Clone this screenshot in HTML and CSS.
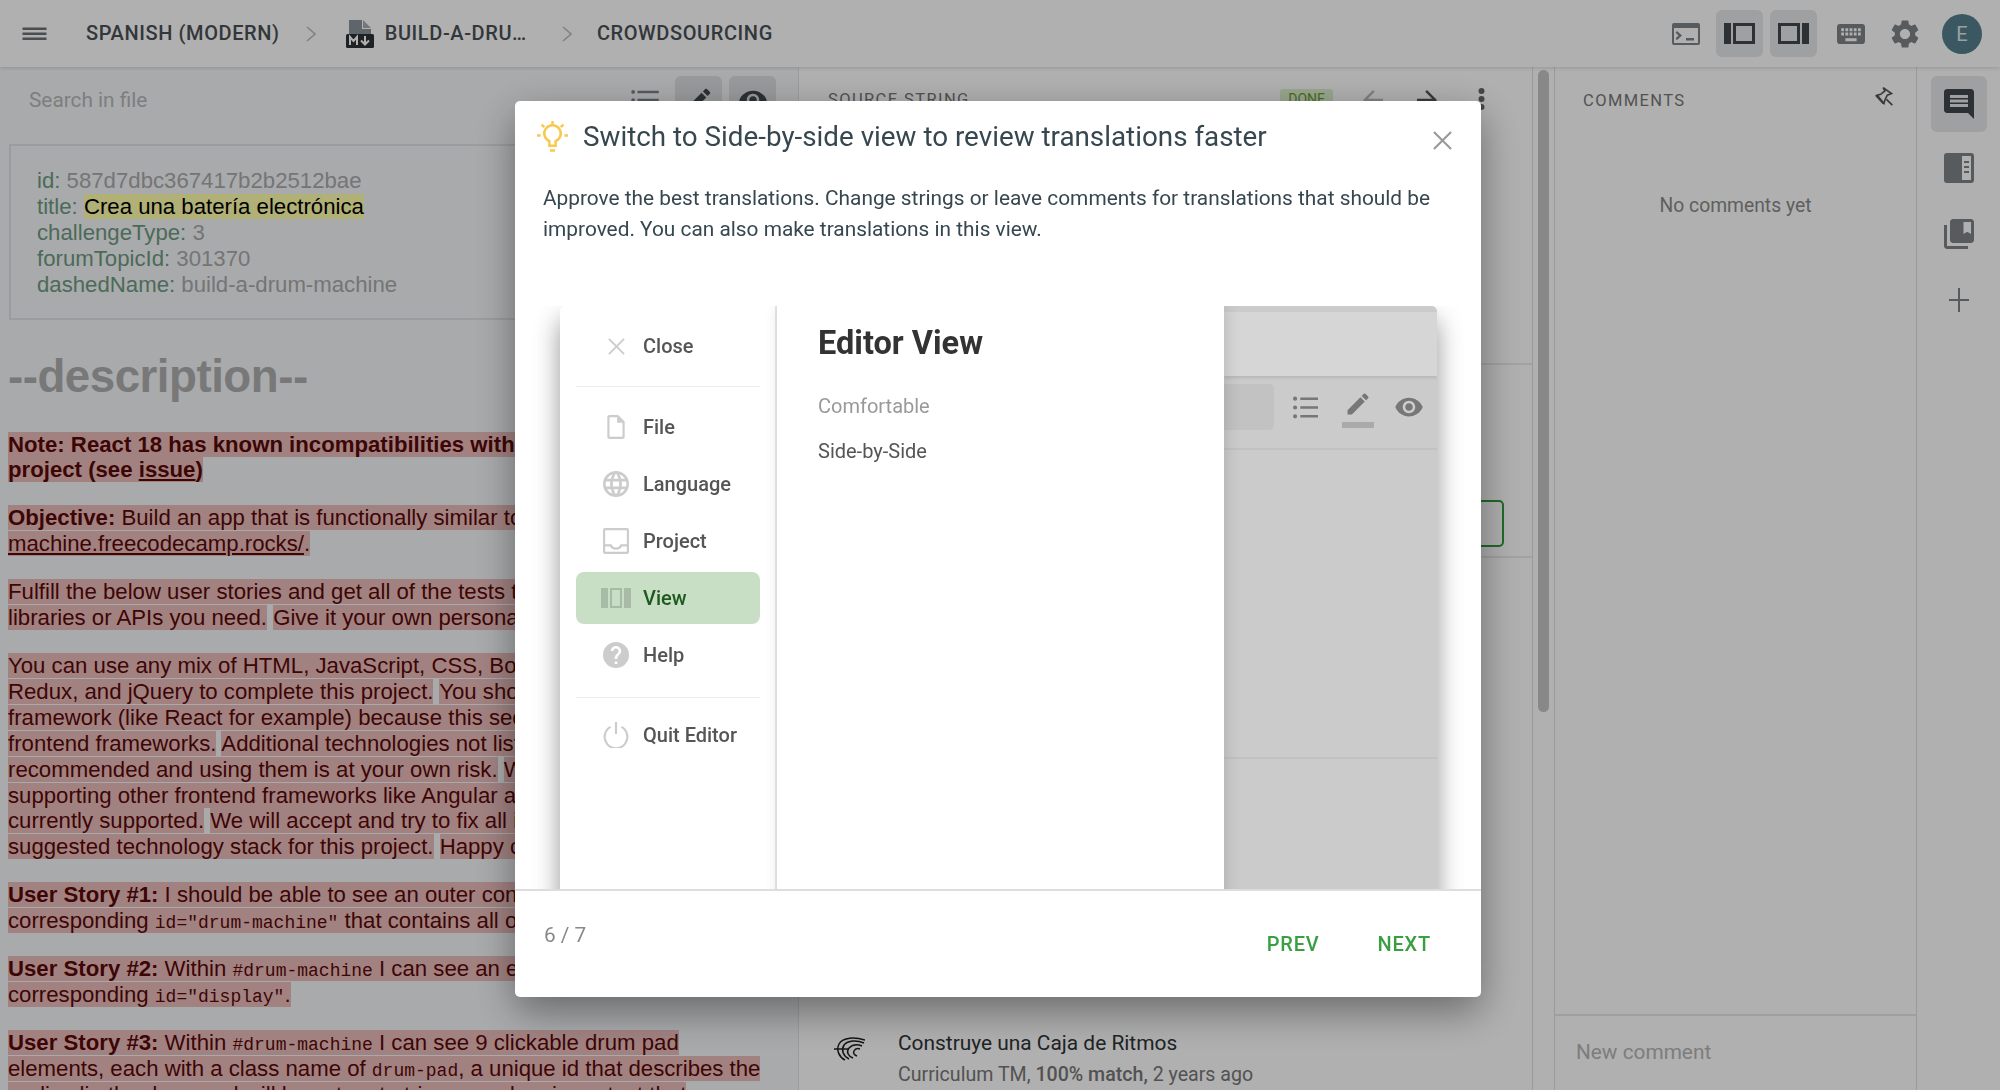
FILE: index.html
```html
<!DOCTYPE html>
<html lang="en">
<head>
    <meta charset="UTF-8" />
    <title>Crowdsourcing - Build a drum machine</title>
    <link rel="stylesheet" href="styles.css">
</head>
<body>
    <header class="topbar">
        <svg class="icon menu-icon" viewBox="0 0 24 24"><path d="M0 18h24v-2.4H0zm0-5h24v-2.4H0zM0 5.600v2.400h24V5.600z"/></svg>
        <span class="crumb crumb-lang">SPANISH (MODERN)</span>
        <svg class="chevron" viewBox="0 0 10 16"><path d="M1 1l8 7-8 7"/></svg>
        <svg class="md-icon" viewBox="0 0 28 28">
            <path class="md-page" d="M3 0h13v9h9v6H3z"/>
            <path class="md-fold" d="M17 0l8 8h-8z"/>
            <rect x="0" y="14" width="28" height="14" rx="1.500"/>
            <path class="md-mark" d="M4 25v-8l3.500 4 3.500-4v8M19 16v8M15 20.500l4 4 4-4"/>
        </svg>
        <span class="crumb crumb-file">BUILD-A-DRU…</span>
        <svg class="chevron chevron-two" viewBox="0 0 10 16"><path d="M1 1l8 7-8 7"/></svg>
        <span class="crumb">CROWDSOURCING</span>

        <div class="topbar-tools">
            <span class="tool"><svg class="icon icon-terminal" viewBox="0 0 28 22"><path d="M2 0h24a2 2 0 0 1 2 2v18a2 2 0 0 1-2 2H2a2 2 0 0 1-2-2V2a2 2 0 0 1 2-2zm0 5v15h24V5zm3 3l5 4.500-5 4.500-1.500-1.500 3-3-3-3zm9 7h8v2.500h-8z"/></svg></span>
            <span class="tool tool-on"><svg class="icon icon-pane dark" viewBox="0 0 31 21"><path fill-rule="evenodd" d="M0 0h7v21H0zM9 0h22v21H9zm3 3v15h16V3z"/></svg></span>
            <span class="tool tool-on"><svg class="icon icon-pane dark" viewBox="0 0 31 21"><path fill-rule="evenodd" d="M24 0h7v21h-7zM0 0h22v21H0zm3 3v15h16V3z"/></svg></span>
            <span class="tool tool-keys"><svg class="icon icon-keys" viewBox="2 5 20 14" preserveAspectRatio="none"><path d="M20 5H4c-1.100 0-2 .9-2 2v10c0 1.100.9 2 2 2h16c1.100 0 2-.9 2-2V7c0-1.100-.9-2-2-2zm-9 3h2v2h-2zm0 3h2v2h-2zM8 8h2v2H8zm0 3h2v2H8zm-1 2H5v-2h2zm0-3H5V8h2zm9 7H8v-2h8zm0-4h-2v-2h2zm0-3h-2V8h2zm3 3h-2v-2h2zm0-3h-2V8h2z"/></svg></span>
            <span class="tool"><svg class="icon gear" viewBox="0 0 24 24"><path d="M19.140 12.940c.04-.3.06-.61.06-.94 0-.32-.02-.64-.07-.94l2.030-1.580c.18-.14.23-.41.12-.61l-1.920-3.320c-.12-.22-.37-.29-.59-.22l-2.390.96c-.5-.38-1.030-.7-1.620-.94L14.400 2.810c-.04-.24-.24-.41-.48-.41h-3.840c-.24 0-.43.17-.47.41L9.250 5.350c-.59.24-1.130.57-1.620.94l-2.390-.96c-.22-.08-.47 0-.59.22L2.740 8.870c-.12.21-.08.47.12.61l2.030 1.580c-.05.3-.09.63-.09.94s.02.64.07.94l-2.030 1.580c-.18.14-.23.41-.12.61l1.920 3.320c.12.22.37.29.59.22l2.390-.96c.5.38 1.030.7 1.620.94l.36 2.540c.05.24.24.41.48.41h3.840c.24 0 .44-.17.47-.41l.36-2.540c.59-.24 1.130-.56 1.620-.94l2.390.96c.22.08.47 0 .59-.22l1.920-3.320c.12-.22.07-.47-.12-.61zM12 15.600c-1.980 0-3.600-1.620-3.600-3.600s1.620-3.600 3.600-3.600 3.600 1.620 3.600 3.600-1.620 3.600-3.600 3.600z"/></svg></span>
            <span class="avatar">E</span>
        </div>
    </header>

    <main class="editor">
        <section class="panel-file">
            <div class="file-search">
                <span class="search-label">Search in file</span>
                <div class="file-tools">
                    <span class="file-tool"><svg class="icon" viewBox="0 0 24 24"><path d="M1 5.500a1.500 1.500 0 1 0 3 0 1.500 1.500 0 0 0-3 0zm0 6.500a1.500 1.500 0 1 0 3 0 1.500 1.500 0 0 0-3 0zm0 6.500a1.500 1.500 0 1 0 3 0 1.500 1.500 0 0 0-3 0zM6 4.500h17v2H6zM6 11h17v2H6zM6 17.500h17v2H6z"/></svg></span>
                    <span class="file-tool file-tool-on"><svg class="icon dark" viewBox="0 0 24 24"><path d="M3 17.250V21h3.750L17.810 9.940l-3.750-3.750zM20.710 7.040c.39-.39.39-1.020 0-1.410l-2.340-2.340c-.39-.39-1.020-.39-1.410 0l-1.830 1.830 3.750 3.750z"/></svg></span>
                    <span class="file-tool file-tool-on"><svg class="icon dark" viewBox="0 0 24 24"><path d="M12 4.500C7 4.500 2.730 7.610 1 12c1.730 4.390 6 7.500 11 7.500s9.270-3.110 11-7.500c-1.730-4.390-6-7.500-11-7.500zM12 17c-2.760 0-5-2.240-5-5s2.240-5 5-5 5 2.240 5 5-2.240 5-5 5zm0-8c-1.660 0-3 1.340-3 3s1.340 3 3 3 3-1.340 3-3-1.340-3-3-3z"/></svg></span>
                </div>
            </div>

            <div class="preview">
                <div class="front-matter">
                    <div><span class="key">id:</span> 587d7dbc367417b2b2512bae</div>
                    <div><span class="key">title:</span> <mark class="yellow">Crea una batería electrónica</mark></div>
                    <div><span class="key">challengeType:</span> 3</div>
                    <div><span class="key">forumTopicId:</span> 301370</div>
                    <div><span class="key">dashedName:</span> build-a-drum-machine</div>
                </div>

                <h1>--description--</h1>

                <p><mark><strong>Note: React 18 has known incompatibilities with the tests for this<br>project (see <u>issue</u>)</strong></mark></p>
                <p><mark><strong>Objective:</strong> Build an app that is functionally similar to this: https://drum-<br><u>machine.freecodecamp.rocks/</u>.</mark></p>
                <p><mark>Fulfill the below user stories and get all of the tests to pass. Use whichever<br>libraries or APIs you need.</mark> <mark>Give it your own personal style.</mark></p>
                <p><mark>You can use any mix of HTML, JavaScript, CSS, Bootstrap, SASS, React,<br>Redux, and jQuery to complete this project.</mark> <mark>You should use a frontend<br>framework (like React for example) because this section is about learning<br>frontend frameworks.</mark> <mark>Additional technologies not listed above are not<br>recommended and using them is at your own risk.</mark> <mark>We are looking at<br>supporting other frontend frameworks like Angular and Vue, but they are not<br>currently supported.</mark> <mark>We will accept and try to fix all issue reports that use the<br>suggested technology stack for this project.</mark> <mark>Happy coding!</mark></p>
                <p><mark><strong>User Story #1:</strong> I should be able to see an outer container with a<br>corresponding <code>id="drum-machine"</code> that contains all other elements.</mark></p>
                <p><mark><strong>User Story #2:</strong> Within <code>#drum-machine</code> I can see an element with a<br>corresponding <code>id="display"</code>.</mark></p>
                <p><mark><strong>User Story #3:</strong> Within <code>#drum-machine</code> I can see 9 clickable drum pad<br>elements, each with a class name of <code>drum-pad</code>, a unique id that describes the<br>audio clip the drum pad will be set up to trigger, and an inner text that</mark></p>
            </div>
        </section>

        <section class="panel-string">
            <div class="string-head">
                <span class="panel-title">SOURCE STRING</span>
                <span class="done-badge">DONE</span>
                <svg class="icon arrow arrow-off" viewBox="0 0 24 24"><path d="M20 11H7.830l5.590-5.590L12 4l-8 8 8 8 1.410-1.410L7.830 13H20z"/></svg>
                <svg class="icon arrow" viewBox="0 0 24 24"><path d="M4 11h12.170l-5.590-5.590L12 4l8 8-8 8-1.410-1.410L16.170 13H4z"/></svg>
                <svg class="icon dots" viewBox="0 0 6 24"><circle cx="3" cy="4" r="3"/><circle cx="3" cy="12" r="3"/><circle cx="3" cy="20" r="3"/></svg>
            </div>
            <div class="string-editor">
                <span class="save-button"></span>
            </div>
            <div class="suggestion">
                <svg class="tm-logo" viewBox="0 0 32 24">
                    <path d="M32 3C22 0 10 0 6 7c-3 6 0 13 6 16"/>
                    <path d="M31 6C24 3 15 3 11 8c-3 5-1 11 5 14"/>
                    <path d="M29 9c-5-2-10-1-13 2-3 4-1 8 4 10"/>
                    <path d="M27 12c-3-1-5 0-6 2-1 2 0 4 3 5"/>
                    <path d="M1 12h14"/>
                </svg>
                <div>
                    <div class="suggestion-text">Construye una Caja de Ritmos</div>
                    <div class="suggestion-meta">Curriculum TM, <b>100% match,</b> 2 years ago</div>
                </div>
            </div>
        </section>

        <div class="scroll-track"><span class="scroll-thumb"></span></div>

        <section class="panel-comments">
            <div class="comments-head">
                <span class="panel-title">COMMENTS</span>
                <svg class="pin" viewBox="0 0 24 24"><path d="M11 2l10 7-5 2-3 6-1 4-8-10 4-1 5-4zM15 16l7 7M2 11l9 10"/></svg>
            </div>
            <div class="comments-empty">No comments yet</div>
            <div class="comment-input">New comment</div>
        </section>

        <nav class="rail">
            <span class="rail-btn rail-btn-on"><svg class="icon dark" viewBox="2 2 20 20"><path d="M21.990 4c0-1.100-.89-2-1.990-2H4c-1.100 0-2 .9-2 2v12c0 1.100.9 2 2 2h14l4 4zM18 14H6v-2h12zm0-3H6V9h12zm0-3H6V6h12z"/></svg></span>
            <span class="rail-btn"><svg class="icon" viewBox="0 0 30 30"><path d="M3 0h24a3 3 0 0 1 3 3v24a3 3 0 0 1-3 3H3a3 3 0 0 1-3-3V3a3 3 0 0 1 3-3zm15 3v24h9V3zm2 5h5v2h-5zm0 5h5v2h-5zm0 5h5v2h-5z" fill-rule="evenodd"/></svg></span>
            <span class="rail-btn"><svg class="icon" viewBox="2 2 20 20"><path d="M4 6H2v14c0 1.100.9 2 2 2h14v-2H4zm16-4H8c-1.100 0-2 .9-2 2v12c0 1.100.9 2 2 2h12c1.100 0 2-.9 2-2V4c0-1.100-.9-2-2-2zm0 10l-2.500-1.500L15 12V4h5z"/></svg></span>
            <span class="rail-btn"><svg class="icon plus" viewBox="0 0 20 24"><path d="M9 0h2v11h9v2h-9v11H9V13H0v-2h9z"/></svg></span>
        </nav>
    </main>

    <div class="overlay">
        <div class="modal">
            <div class="modal-head">
                <svg class="bulb" viewBox="0 0 30 30">
                    <path d="M15 0v3.500M4.500 3.500L7 6M25.500 3.500L23 6M0 14h3.500M26.500 14H30"/>
                    <path d="M12 24v-4.500a8 8 0 1 1 6 0V24z"/>
                    <path d="M12.500 28.500h5"/>
                </svg>
                <h2>Switch to Side-by-side view to review translations faster</h2>
                <svg class="modal-close" viewBox="0 0 20 20"><path d="M1 1l18 18M19 1L1 19"/></svg>
            </div>
            <p class="modal-text">Approve the best translations. Change strings or leave comments for translations that should be improved. You can also make translations in this view.</p>

            <div class="shot-wrap">
                <div class="shot">
                    <div class="shot-menu">
                        <div class="shot-item shot-close">
                            <svg class="shot-icon stroke" viewBox="0 0 20 20"><path d="M2 2l16 16M18 2L2 18"/></svg>Close
                        </div>
                        <div class="shot-group">
                            <div class="shot-item"><svg class="shot-icon" viewBox="0 0 24 24"><path d="M14 1H6C4.700 1 4 2 4 3v18c0 1.200.8 2 2 2h12c1.200 0 2-.8 2-2V7zM6 21V3h7v5h5v13z"/></svg>File</div>
                            <div class="shot-item"><svg class="shot-icon" viewBox="0 0 24 24"><path d="M12 0a12 12 0 1 0 0 24 12 12 0 0 0 0-24zm8.300 7.200h-3.500a18 18 0 0 0-1.700-4.300 9.700 9.700 0 0 1 5.200 4.300zM12 2.400a17 17 0 0 1 2.300 4.800H9.700A17 17 0 0 1 12 2.400zM2.700 14.400a9.700 9.700 0 0 1 0-4.800h4a20 20 0 0 0 0 4.800zm1 2.400h3.500a18 18 0 0 0 1.700 4.300 9.700 9.700 0 0 1-5.200-4.300zm3.500-9.600H3.700a9.700 9.700 0 0 1 5.200-4.300 18 18 0 0 0-1.700 4.300zM12 21.600a17 17 0 0 1-2.300-4.800h4.600a17 17 0 0 1-2.300 4.800zm2.800-7.200H9.200a17 17 0 0 1 0-4.800h5.600a17 17 0 0 1 0 4.800zm.3 6.700a18 18 0 0 0 1.700-4.300h3.500a9.700 9.700 0 0 1-5.200 4.300zm2.200-6.700a20 20 0 0 0 0-4.800h4a9.700 9.700 0 0 1 0 4.800z"/></svg>Language</div>
                            <div class="shot-item"><svg class="shot-icon" viewBox="0 0 24 24"><path d="M2 0h20a2 2 0 0 1 2 2v20a2 2 0 0 1-2 2H2a2 2 0 0 1-2-2V2a2 2 0 0 1 2-2zm0 2v13h6c.5 2 2 3 4 3s3.500-1 4-3h6V2zm0 15v5h20v-5h-4.500c-1 2-3 3-5.500 3s-4.500-1-5.500-3z"/></svg>Project</div>
                            <div class="shot-item shot-item-on"><svg class="shot-icon shot-icon-wide" viewBox="0 0 30 20"><path d="M0 0h7v20H0zM23 0h7v20h-7zM9 0h12v20H9zm2 2v16h8V2z"/></svg>View</div>
                            <div class="shot-item"><svg class="shot-icon" viewBox="2 2 20 20"><path d="M12 2a10 10 0 1 0 0 20 10 10 0 0 0 0-20zm1 17h-2v-2h2zm2.070-7.750l-.9.92C13.450 12.900 13 13.500 13 15h-2v-.5c0-1.100.45-2.100 1.170-2.830l1.240-1.260c.37-.36.59-.86.59-1.410 0-1.100-.9-2-2-2s-2 .9-2 2H8c0-2.210 1.790-4 4-4s4 1.790 4 4c0 .88-.36 1.680-.93 2.250z"/></svg>Help</div>
                        </div>
                        <div class="shot-item shot-quit">
                            <svg class="shot-icon stroke" viewBox="0 0 24 24"><path d="M7 4.500a10.500 10.500 0 1 0 10 0M12 0v11"/></svg>Quit Editor
                        </div>
                    </div>
                    <div class="shot-options">
                        <h3>Editor View</h3>
                        <div class="shot-option muted">Comfortable</div>
                        <div class="shot-option">Side-by-Side</div>
                    </div>
                    <div class="shot-page">
                        <div class="shot-page-head"></div>
                        <div class="shot-page-bar">
                            <span class="shot-page-search"></span>
                            <svg class="shot-page-icon shot-list" viewBox="0 0 24 24"><path d="M0 3.500a2 2 0 1 0 4 0 2 2 0 0 0-4 0zm0 8.500a2 2 0 1 0 4 0 2 2 0 0 0-4 0zm0 8.500a2 2 0 1 0 4 0 2 2 0 0 0-4 0zM7 2.300h17v2.400H7zM7 10.800h17v2.400H7zM7 19.300h17v2.400H7z"/></svg>
                            <span class="shot-pencil">
                                <svg class="shot-page-icon" viewBox="0 0 24 24"><path d="M3 17.250V21h3.750L17.810 9.940l-3.750-3.750zM20.710 7.040c.39-.39.39-1.020 0-1.410l-2.340-2.340c-.39-.39-1.020-.39-1.410 0l-1.830 1.830 3.750 3.750z"/></svg>
                            </span>
                            <svg class="shot-page-icon shot-eye" viewBox="0 0 24 24"><path d="M12 4.500C7 4.500 2.730 7.610 1 12c1.730 4.390 6 7.500 11 7.500s9.270-3.110 11-7.500c-1.730-4.390-6-7.500-11-7.500zM12 17c-2.760 0-5-2.240-5-5s2.240-5 5-5 5 2.240 5 5-2.240 5-5 5zm0-8c-1.660 0-3 1.340-3 3s1.340 3 3 3 3-1.340 3-3-1.340-3-3-3z"/></svg>
                        </div>
                        <div class="shot-page-body"></div>
                    </div>
                </div>
            </div>

            <div class="modal-foot">
                <span class="step">6 / 7</span>
                <div class="modal-actions">
                    <button class="foot-btn">PREV</button>
                    <button class="foot-btn">NEXT</button>
                </div>
            </div>
        </div>
    </div>
</body>
</html>
```

FILE: styles.css
```css
* {
    box-sizing: border-box;
}

html,
body {
    height: 100%;
}

body {
    margin: 0;
    width: 2000px;
    height: 1090px;
    overflow: hidden;
    display: flex;
    flex-direction: column;
    font-family: 'Roboto', sans-serif;
    background-color: #fff;
    color: #333;
}

.icon {
    display: block;
    fill: #7f8488;
}

.icon.dark {
    fill: #3f474d;
}

/* top bar */
.topbar {
    flex: 0 0 67px;
    display: flex;
    align-items: center;
    padding-left: 22px;
    background-color: #fff;
    box-shadow: 0 1px 4px rgba(0, 0, 0, 0.15);
    position: relative;
    z-index: 2;
}

.menu-icon {
    width: 25px;
    height: 24px;
    margin-right: 39px;
    fill: #6d7175;
}

.crumb {
    margin-top: -2px;
    font-size: 20px;
    font-weight: 500;
    letter-spacing: 0.6px;
    color: #4a5055;
    white-space: nowrap;
}

.chevron {
    width: 10px;
    height: 16px;
    margin: 0 30px 0 26px;
    fill: none;
    stroke: #bbb;
    stroke-width: 1.6;
}

.md-icon {
    width: 28px;
    height: 28px;
    margin-right: 11px;
    fill: #2d3236;
}

.md-page {
    fill: #89949c;
}

.md-fold {
    fill: #a5adb3;
}

.md-mark {
    fill: none;
    stroke: #fff;
    stroke-width: 2;
}

.chevron-two {
    margin-left: 35px;
    margin-right: 25px;
}

.topbar-tools {
    margin-left: auto;
    display: flex;
    align-items: center;
    gap: 7px;
    padding-right: 18px;
}

.tool {
    width: 47px;
    height: 47px;
    display: flex;
    align-items: center;
    justify-content: center;
    border-radius: 6px;
}

.icon-terminal {
    width: 28px;
    height: 22px;
}

.icon-pane {
    width: 31px;
    height: 21px;
}

.icon-keys {
    width: 28px;
    height: 20px;
}

.tool-keys {
    margin-left: 3px;
}

.tool .gear {
    width: 34px;
    height: 34px;
}

.tool-on {
    background-color: #e6e8ea;
}

.avatar {
    width: 40px;
    height: 40px;
    margin-left: 7px;
    border-radius: 50%;
    background-color: #56808f;
    color: #dfe8ea;
    font-size: 20px;
    display: flex;
    align-items: center;
    justify-content: center;
}

/* three panels */
.editor {
    flex: 1;
    display: flex;
    min-height: 0;
}

.panel-file {
    flex: 0 0 799px;
    background-color: #f5f7fa;
    border-right: 1px solid #e3e3e3;
    overflow: hidden;
}

.file-search {
    height: 77px;
    display: flex;
    align-items: flex-start;
    justify-content: space-between;
    padding: 9px 22px 0 29px;
}

.search-label {
    margin-top: 12px;
    font-size: 20.8px;
    color: #b5b7b9;
}

.file-tools {
    display: flex;
    gap: 7px;
}

.file-tool {
    width: 47px;
    height: 47px;
    border-radius: 6px;
    display: flex;
    align-items: center;
    justify-content: center;
}

.file-tool .icon {
    width: 30px;
    height: 30px;
}

.file-tool-on {
    background-color: #dcdfe2;
}

.preview {
    padding-left: 8px;
    font-family: 'Liberation Sans', sans-serif;
    font-size: 22.2px;
    line-height: 25.9px;
}

.front-matter {
    margin: 0 0 0 1px;
    padding: 22px 26px 20px;
    border: 2px solid #e1e3e6;
    color: #aaa;
}

.key {
    color: #6f9a80;
}

mark {
    background-color: #eabdbc;
    color: #5a0808;
}

mark.yellow {
    background-color: #ffffad;
    color: #000;
}

h1 {
    margin: 32px 0 30px;
    font-size: 45.7px;
    line-height: 50px;
    color: #aeaeae;
    letter-spacing: -0.5px;
}

.preview p {
    margin: 0 0 22px;
    white-space: nowrap;
}

code {
    font-family: 'Liberation Mono', monospace;
    font-size: 18px;
    line-height: 0;
}

.panel-string {
    flex: 0 0 734px;
    display: flex;
    flex-direction: column;
    background-color: #fff;
    border-right: 1px solid #e0e0e0;
    overflow: hidden;
}

.string-head {
    flex: 0 0 298px;
    display: flex;
    align-items: flex-start;
    padding: 22px 47px 0 29px;
    border-bottom: 2px solid #ebebeb;
}

.panel-title {
    font-size: 16.5px;
    letter-spacing: 1.4px;
    color: #777;
    margin-top: 1px;
}

.done-badge {
    margin-left: auto;
    margin-right: 25px;
    padding: 2px 8px;
    font-size: 14px;
    background-color: #dff0cf;
    color: #6a9d2e;
    border-radius: 3px;
}

.arrow {
    width: 30px;
    height: 30px;
    margin-top: -4px;
    margin-right: 24px;
    fill: #555;
}

.arrow-off {
    fill: #bbb;
}

.dots {
    width: 7px;
    height: 24px;
    margin: -2px 0 0 12px;
    fill: #666;
}

.string-editor {
    flex: 0 0 193px;
    border-bottom: 2px solid #ebebeb;
    display: flex;
    align-items: flex-end;
    justify-content: flex-end;
    padding: 0 28px 9px 0;
}

.save-button {
    width: 200px;
    height: 47px;
    border: 2px solid #2f9a3a;
    border-radius: 5px;
}

.suggestion {
    margin-top: auto;
    display: flex;
    gap: 33px;
    padding: 0 0 4px 34px;
}

.tm-logo {
    width: 32px;
    height: 24px;
    flex: none;
    margin-top: 6px;
    fill: none;
    stroke: #1c1c1c;
    stroke-width: 1.500;
}

.suggestion-text {
    font-size: 20.9px;
    color: #2f3336;
    margin-bottom: 8px;
}

.suggestion-meta {
    font-size: 19.6px;
    color: #777;
}

.suggestion-meta b {
    font-weight: 500;
}

.scroll-track {
    flex: 0 0 21px;
    padding: 3px 5px 0;
    background-color: #fff;
    border-right: 1px solid #e0e0e0;
}

.scroll-thumb {
    display: block;
    width: 11px;
    height: 642px;
    border-radius: 6px;
    background-color: #c6c6c6;
}

.panel-comments {
    flex: 0 0 362px;
    display: flex;
    flex-direction: column;
    border-right: 1px solid #e0e0e0;
}

.comments-head {
    display: flex;
    justify-content: space-between;
    padding: 23px 22px 0 28px;
}

.pin {
    width: 20px;
    height: 20px;
    margin-top: -4px;
    fill: none;
    stroke: #555;
    stroke-width: 2;
}

.comments-empty {
    margin-top: 84px;
    text-align: center;
    font-size: 19.3px;
    color: #8a8a8a;
}

.comment-input {
    margin-top: auto;
    height: 76px;
    padding: 24px 20px 0 21px;
    border-top: 2px solid #e6e6e6;
    font-size: 20.8px;
    color: #b5b5b5;
}

.rail {
    flex: 1;
    display: flex;
    flex-direction: column;
    align-items: center;
    padding: 9px 18px 0 14px;
    gap: 6px;
}

.rail-btn {
    width: 56px;
    height: 60px;
    flex: none;
    border-radius: 6px;
    display: flex;
    align-items: center;
    justify-content: center;
}

.rail-btn .icon {
    width: 30px;
    height: 30px;
}

.rail-btn .plus {
    width: 20px;
    height: 24px;
}

.rail-btn-on {
    height: 56px;
    background-color: #e6e8ea;
}

/* dimmed layer and tour dialog */
.overlay {
    position: fixed;
    top: 0;
    left: 0;
    width: 2000px;
    height: 1090px;
    padding: 8px 4px 0 0;
    background-color: rgba(0, 0, 0, 0.31);
    z-index: 10;
    display: flex;
    align-items: center;
    justify-content: center;
}

.modal {
    width: 966px;
    height: 896px;
    display: flex;
    flex-direction: column;
    border-radius: 5px;
    background-color: #fff;
    box-shadow: 0 14px 40px rgba(0, 0, 0, 0.4);
    overflow: hidden;
}

.modal-head {
    display: flex;
    align-items: center;
    padding: 19px 29px 0 22px;
}

.bulb {
    width: 31px;
    height: 31px;
    margin: 1px 15px 1px 0;
    fill: none;
    stroke: #f8c94f;
    stroke-width: 2.400;
}

.modal-head h2 {
    margin: 0;
    font-size: 27.8px;
    font-weight: 400;
    color: #37474f;
}

.modal-close {
    width: 19px;
    height: 19px;
    margin-left: auto;
    margin-top: 8px;
    fill: none;
    stroke: #999;
    stroke-width: 2.2;
}

.modal-text {
    margin: 30px 28px 0;
    font-size: 20.85px;
    line-height: 31px;
    color: #37474f;
}

.shot-wrap {
    flex: 1;
    min-height: 0;
    margin-top: 61px;
    padding: 0 44px 0 45px;
    overflow: hidden;
    border-bottom: 2px solid #ddd;
}

.shot {
    display: flex;
    height: 640px;
    border-radius: 6px;
    box-shadow: 0 14px 26px rgba(0, 0, 0, 0.42);
}

.shot-menu {
    flex: 0 0 217px;
    padding: 0 15px 0 16px;
    background-color: #fff;
    border-right: 2px solid #e8e8e8;
    border-radius: 6px 0 0 0;
}

.shot-item {
    height: 52px;
    display: flex;
    align-items: center;
    padding-left: 28px;
    font-size: 20px;
    font-weight: 500;
    color: #555;
    border-radius: 8px;
    margin-bottom: 5px;
}

.shot-close {
    height: 64px;
    margin: 8px 0 8px;
}

.shot-group {
    padding: 14px 0 11px;
    margin-bottom: 11px;
    border-top: 1px solid #ececec;
    border-bottom: 1px solid #ececec;
}

.shot-item-on {
    background-color: #c8dfc6;
    color: #1e5a1e;
}

.shot-icon {
    width: 26px;
    height: 26px;
    margin: 0 14px 0 -1px;
    fill: #cccccc;
}

.shot-icon.stroke {
    fill: none;
    stroke: #cccccc;
    stroke-width: 2;
}

.shot-close .shot-icon {
    width: 19px;
    height: 19px;
    margin: 0 17px 0 3px;
}

.shot-icon-wide {
    width: 30px;
    margin: 0 12px 0 -3px;
    fill: #a7bba6;
}

.shot-options {
    flex: 0 0 447px;
    padding: 15px 32px 14px 41px;
    background-color: #fff;
    box-shadow: 2px 0 14px rgba(0, 0, 0, 0.14);
    position: relative;
}

.shot-options h3 {
    margin: 0 0 29px;
    font-size: 32.5px;
    line-height: 44px;
    font-weight: 700;
    color: #333;
}

.shot-option {
    font-size: 20px;
    line-height: 24px;
    margin-bottom: 21px;
    color: #555;
}

.muted {
    color: #999;
}

.shot-page {
    flex: 1;
    border-radius: 0 6px 0 0;
    overflow: hidden;
    background-color: #cbcbcb;
}

.shot-page-head {
    height: 70px;
    background-color: #d6d6d6;
    border-top: 6px solid #cbcbcb;
    box-shadow: 0 2px 3px rgba(0, 0, 0, 0.1);
}

.shot-page-bar {
    height: 74px;
    display: flex;
    align-items: center;
    border-bottom: 2px solid #c2c2c2;
}

.shot-page-search {
    width: 50px;
    height: 46px;
    margin-right: 19px;
    margin-top: -10px;
    border-radius: 0 5px 5px 0;
    background-color: #c2c2c2;
}

.shot-page-icon {
    display: block;
    width: 28px;
    height: 28px;
    margin-top: -10px;
    fill: #777;
}

.shot-list {
    width: 25px;
    height: 25px;
}

.shot-pencil {
    display: block;
    width: 32px;
    margin: 0 20px 0 24px;
    padding-bottom: 4px;
    border-bottom: 6px solid #aaa;
}

.shot-pencil .shot-page-icon {
    margin: 0 auto;
    margin-top: -6px;
}

.shot-eye {
    width: 30px;
    height: 30px;
}

.shot-page-body {
    height: 309px;
    border-bottom: 2px solid #c2c2c2;
}

.modal-foot {
    flex: 0 0 106px;
    display: flex;
    align-items: flex-start;
    justify-content: space-between;
    padding: 21px 50px 0 29px;
}

.step {
    margin-top: 9px;
    font-size: 20.8px;
    line-height: 28px;
    color: #888;
}

.modal-actions {
    display: flex;
    gap: 58px;
    padding-top: 20px;
}

.foot-btn {
    padding: 0;
    border: 0;
    background: none;
    font-family: inherit;
    font-size: 20px;
    font-weight: 500;
    letter-spacing: 0.8px;
    color: #3a9e42;
}
```
